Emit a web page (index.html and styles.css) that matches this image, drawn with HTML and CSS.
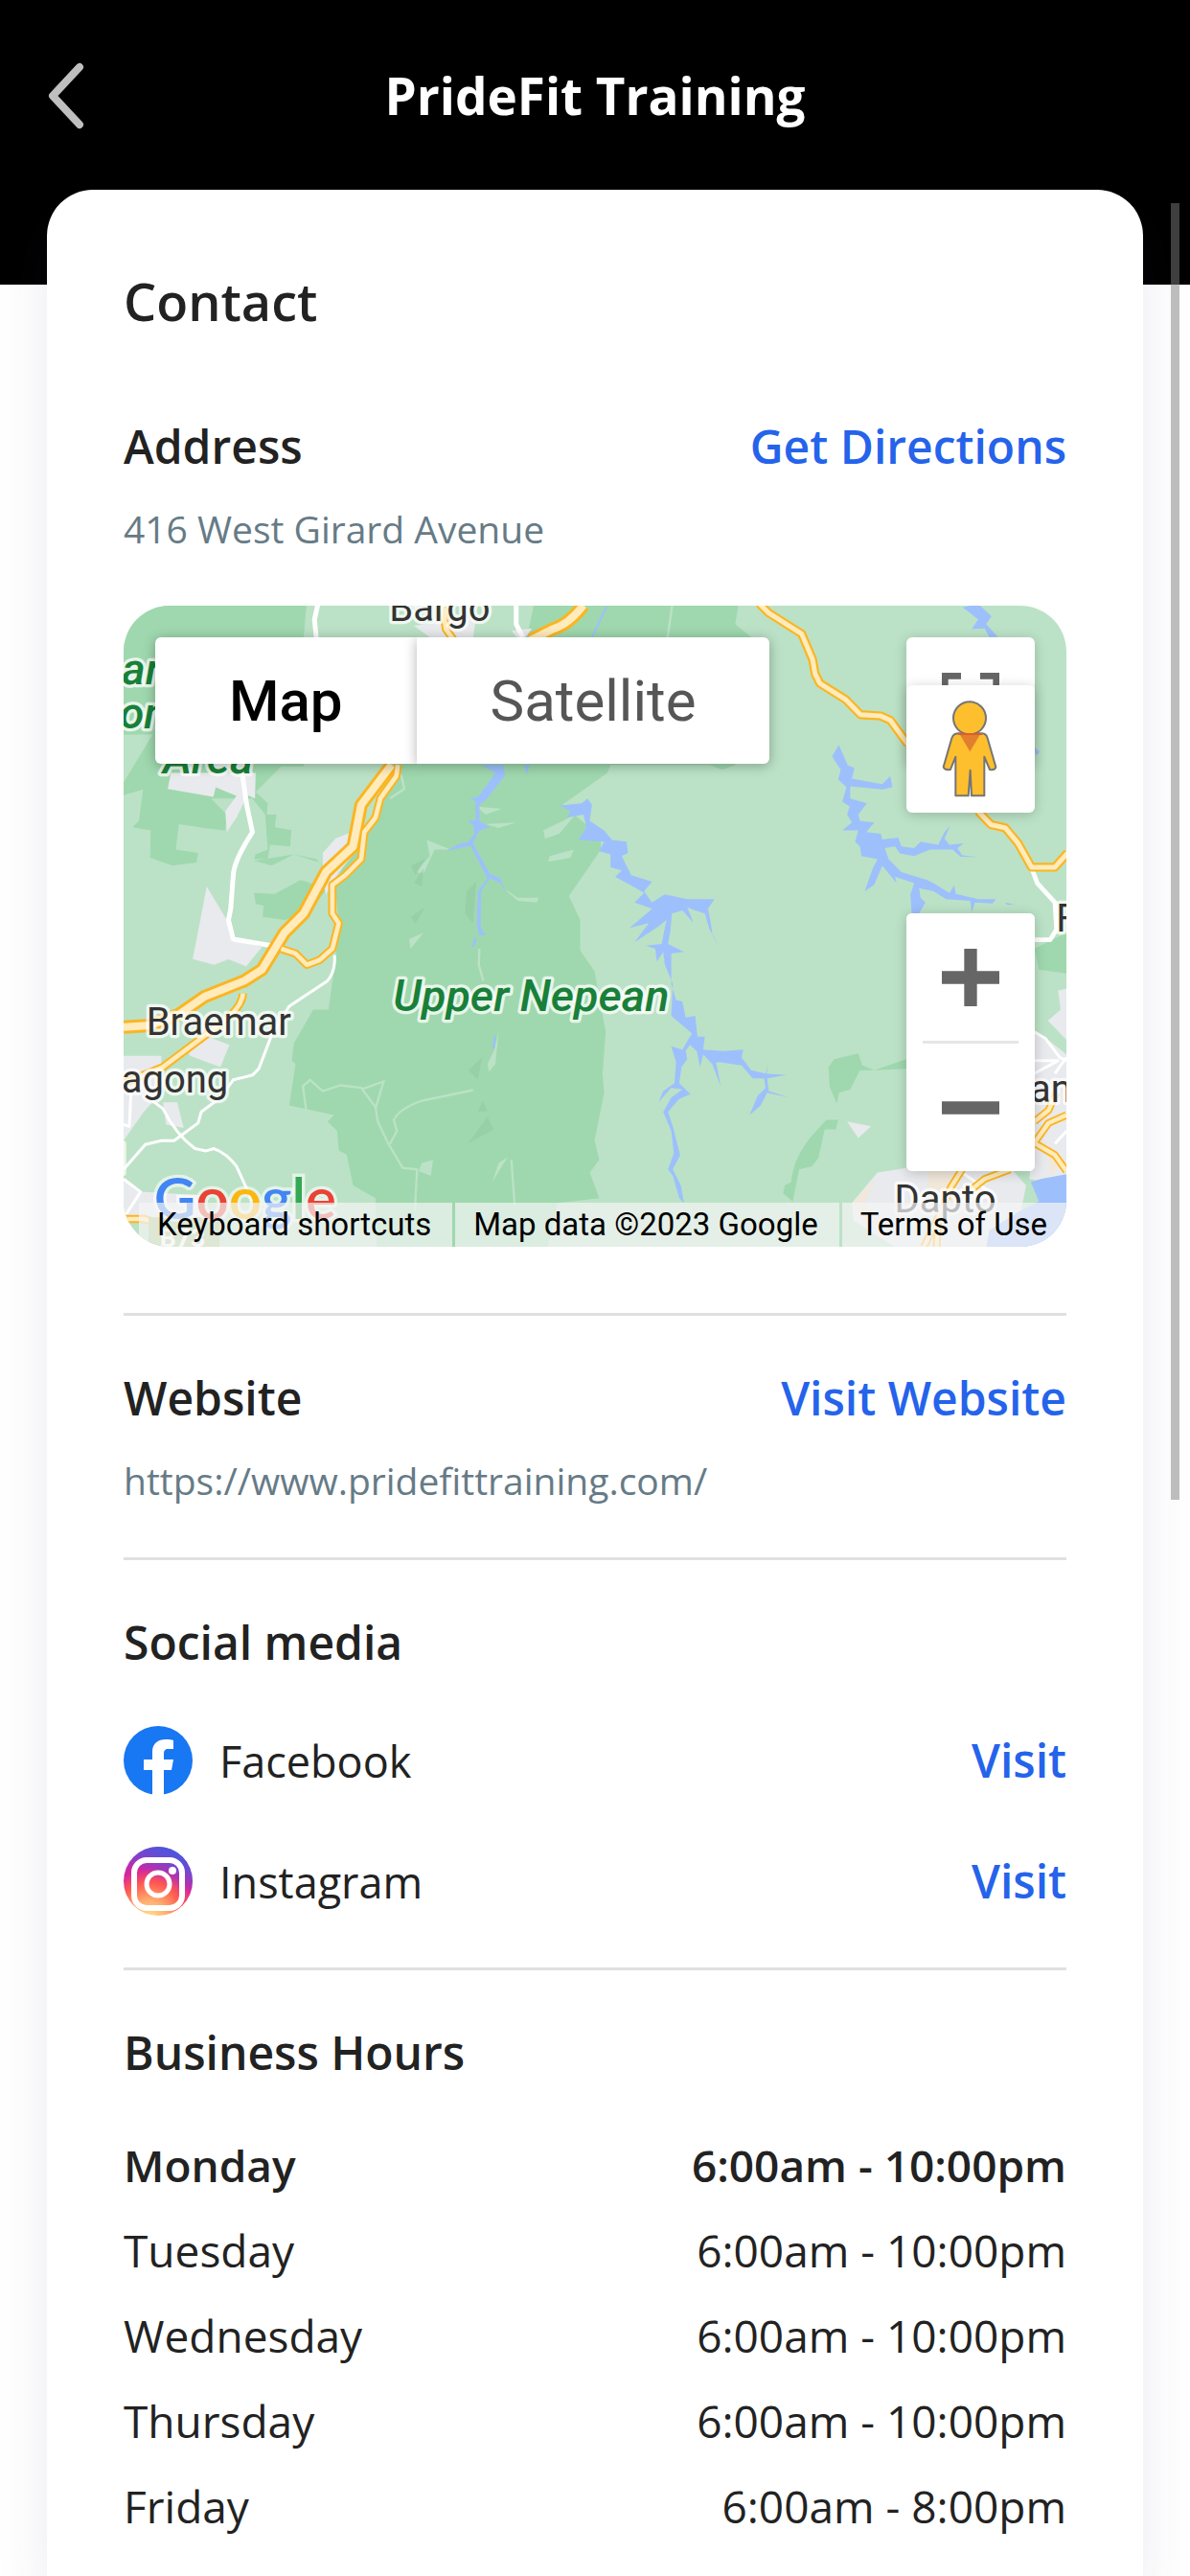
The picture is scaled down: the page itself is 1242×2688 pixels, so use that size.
FILE: index.html
```html
<!DOCTYPE html>
<html lang="en">
<head>
  <meta charset="UTF-8">
  <meta name="viewport" content="width=device-width, initial-scale=1.0">
  <title>PrideFit Training</title>
  <link rel="stylesheet" href="styles.css">
</head>
<body>
  <header class="topbar">
    <button class="back-btn" aria-label="Back">
      <svg width="40" height="72" viewBox="0 0 40 72"><path d="M34 6 L6 36 L34 66" fill="none" stroke="#bfbfbf" stroke-width="8" stroke-linecap="round" stroke-linejoin="round"/></svg>
    </button>
    <h1>PrideFit Training</h1>
  </header>

  <main class="card">
    <h2>Contact</h2>

    <!-- Address -->
    <section class="block">
      <div class="row">
        <h3>Address</h3>
        <a href="#" class="action">Get Directions</a>
      </div>
      <p class="detail">416 West Girard Avenue</p>

      <div class="map">
        <svg class="map-canvas" viewBox="27 36 2949 2007" preserveAspectRatio="xMidYMid slice">
          <rect x="0" y="0" width="3100" height="2100" fill="#bbe2c6"/>

          <!-- Forest -->
          <g fill="#9fd8ae">
            <path d="M0 0 H602 L590 140 V540 H520 L440 620 L478 655 L475 690 L505 690 L500 730 L552 738 L548 790 L485 785 L478 830 L435 830 L440 815 L478 800 L470 690 L430 640 L300 640 L350 690 L345 740 L300 735 L200 720 L190 800 L260 810 L255 840 L180 850 L110 825 L112 740 L55 730 L75 710 L88 612 L27 630 V590 L118 440 H0 Z"/>
            <path d="M435 835 L490 850 L560 815 L630 830 L665 870 L650 920 L600 900 L580 895 L500 938 L435 935 L440 970 L465 975 L462 1010 L530 1020 L600 1000 L700 880 L800 700 L870 530 L1290 130 L1310 36 H1950 L1940 95 L1990 135 L1940 535 L1900 550 L1860 535 H1550 L1540 560 L1400 660 L1520 760 L1520 800 L1420 945 L1455 1020 V1115 L1500 1180 L1535 1370 L1525 1500 L1530 1560 L1500 1710 L1515 1770 L1485 1810 L1515 1890 L1385 1905 L1350 2060 H820 L815 1890 L745 1850 L725 1755 L700 1740 L695 1680 L665 1650 L685 1630 L545 1600 L565 1470 L553 1460 L560 1405 L620 1300 L668 1300 L690 1140 L700 1020 L690 930 L640 840 L560 815 Z"/>
            <path d="M2232 1480 L2250 1455 L2325 1437 L2338 1475 L2375 1490 L2475 1455 L2475 1485 L2375 1490 L2330 1490 L2300 1550 L2265 1560 L2258 1595 L2235 1540 Z"/>
            <path d="M2225 1645 H2262 L2255 1675 H2220 L2200 1765 L2180 1790 L2140 1800 L2120 1900 L2090 1875 L2095 1850 L2115 1840 Q2120 1770 2175 1700 Z"/>
            <path d="M2876 1110 L2976 1060 V1187 L2890 1175 Z"/>
          </g>
          <g fill="#bbe2c6">
            <path d="M740 640 L745 570 L800 580 L780 620 Z"/>
            <path d="M940 870 L985 820 L975 770 L1050 800 L1000 800 L965 875 Z"/>
            <path d="M1340 740 L1440 690 L1390 750 L1345 765 Z M1360 820 L1435 800 L1425 825 L1355 838 Z"/>
            <path d="M1215 920 L1260 950 L1325 950 L1320 965 L1260 960 Z M1130 665 L1210 672 L1160 690 Z M1160 720 L1255 715 L1200 732 Z"/>
            <path d="M920 1080 L965 1060 L925 1110 Z M1200 1370 L1190 1470 L1170 1495 L1165 1470 L1185 1430 Z"/>
            <path d="M960 1780 L995 1770 L988 1820 L950 1805 Z M1180 1840 L1200 1780 L1228 1762 Z"/>
          </g>
          <g fill="#94cda5" opacity="0.7">
            <path d="M925 850 L970 830 L940 880 Z M935 905 L965 860 L960 915 Z M925 1010 L970 980 L940 1030 Z"/>
            <path d="M1100 930 L1130 900 L1120 1030 L1095 1000 Z M1105 1490 L1148 1450 L1135 1520 Z M1135 1620 L1150 1585 L1165 1618 Z M1105 1718 L1165 1635 L1185 1675 Z"/>
          </g>

          <!-- Built up areas -->
          <g fill="#e8eaed">
            <path d="M165 610 L175 560 H440 L438 640 L415 630 L380 700 L350 745 L345 680 L380 632 L315 605 L308 635 Z"/>
            <path d="M287 915 L350 1020 L375 1080 L460 1105 L410 1165 L355 1143 L310 1160 L243 1142 L265 1030 Z"/>
            <path d="M650 810 L690 765 L740 745 L760 800 L700 870 L660 940 L650 900 Z"/>
            <path d="M225 1420 L290 1385 L358 1410 L330 1480 L235 1445 Z"/>
            <path d="M27 1445 H145 V1560 L90 1620 L27 1710 Z M150 1590 H195 L215 1670 L160 1660 Z"/>
            <path d="M27 1830 L80 1870 L260 1880 L290 1960 H27 Z"/>
            <path d="M935 100 L1130 70 L1120 140 H990 Z M1240 115 L1305 108 L1280 140 H1260 Z"/>
            <path d="M2290 1650 L2365 1665 L2325 1702 Z"/>
            <path d="M2876 1365 L2925 1400 L2976 1440 V1850 L2860 1830 L2876 1700 Z"/>
            <path d="M2918 1335 L2958 1300 L2950 1240 L2976 1235 V1395 Z"/>
            <path d="M2305 1905 L2385 1810 L2480 1795 H2800 L2850 1850 L2830 1950 L2740 2043 H2440 L2310 1960 Z"/>
          </g>
          <g fill="#f1e8da">
            <path d="M2310 1900 L2380 1830 L2345 1900 L2420 2000 L2330 1950 Z M2545 1805 H2650 L2590 1900 L2540 1870 Z M2900 1700 L2950 1790 L2930 1820 Z"/>
          </g>

          <!-- Water -->
          <g fill="#9dc0fc">
            <path d="M1145 535 H1215 L1220 568 L1160 645 L1140 660 V710 L1172 730 L1140 740 L1120 780 L1172 875 L1205 890 L1225 940 L1205 905 L1172 890 L1145 930 L1144 1045 L1160 1068 L1140 1068 L1132 1040 L1135 930 L1165 890 L1112 788 L1035 805 L1070 785 L1105 775 L1125 750 L1120 722 L1100 710 L1128 708 V650 L1110 640 L1135 635 L1165 595 L1190 560 Z"/>
            <path d="M1280 535 H1298 L1288 565 Z M1122 1080 L1132 1072 L1128 1095 L1116 1110 Z M1185 1385 L1193 1382 L1187 1425 L1180 1420 Z"/>
            <path d="M1390 662 L1460 655 L1478 640 L1492 660 L1485 710 L1530 740 L1555 770 L1600 775 L1605 810 L1585 820 L1615 880 L1680 900 L1655 930 L1680 965 L1720 940 L1790 955 L1875 955 L1855 985 L1862 1020 L1870 1070 L1892 1105 L1860 1050 L1845 1000 L1815 990 L1790 980 L1810 1030 L1775 990 L1742 1000 L1738 1050 L1730 1095 L1780 1120 L1740 1125 L1740 1220 L1755 1270 L1775 1275 L1785 1325 L1815 1320 L1822 1385 L1845 1385 L1840 1425 L1905 1430 L1965 1425 L1960 1450 L1990 1490 L2035 1500 L2045 1470 L2038 1500 L2100 1505 L2040 1515 L2045 1555 L2110 1575 L2040 1560 L2020 1600 L1985 1630 L2010 1570 L2035 1545 L2030 1515 L1995 1515 L1960 1475 L1895 1465 L1880 1465 L1895 1540 L1868 1470 L1840 1440 L1830 1480 L1820 1430 L1798 1410 L1785 1430 L1790 1455 L1772 1480 L1765 1530 L1800 1565 L1765 1580 L1730 1620 L1745 1665 L1768 1755 L1745 1800 L1770 1850 L1780 1905 L1765 1890 L1745 1820 L1730 1800 L1748 1750 L1740 1680 L1715 1620 L1740 1575 L1775 1550 L1740 1545 L1700 1590 L1715 1555 L1750 1530 L1755 1465 L1740 1415 L1775 1425 L1795 1390 L1805 1375 L1770 1345 L1740 1320 L1745 1220 L1720 1160 L1715 1120 L1695 1150 L1690 1110 L1660 1100 L1710 1095 L1725 1020 L1700 1040 L1625 1090 L1670 1030 L1610 1045 L1680 985 L1625 965 L1655 935 L1620 915 L1565 885 L1585 865 L1550 855 L1550 815 L1515 805 L1530 775 L1450 770 L1475 730 L1465 690 L1415 700 L1425 680 Z"/>
            <path d="M2243 508 L2264 472 L2292 535 L2313 545 L2305 578 L2400 595 L2425 570 L2432 605 L2400 612 L2300 602 V640 L2352 655 L2325 690 L2330 710 L2375 715 L2350 745 L2395 750 L2400 768 L2450 762 L2460 790 L2500 795 L2520 775 L2575 785 L2595 745 L2612 725 L2595 765 L2610 785 L2655 780 L2635 795 L2650 818 L2700 823 L2645 822 L2620 800 L2550 800 L2500 820 L2455 812 L2440 790 L2408 795 L2420 830 L2460 870 L2540 895 L2560 905 L2610 935 L2625 912 L2630 938 L2700 955 L2755 955 L2745 968 L2690 965 L2680 995 L2675 960 L2600 955 L2560 930 L2515 920 L2520 950 L2535 965 L2515 1000 H2492 L2488 940 L2500 905 L2440 885 L2445 905 L2400 850 L2375 910 L2345 930 L2370 860 L2385 830 L2335 820 L2330 790 L2315 775 L2325 740 L2275 740 L2305 715 L2290 690 L2298 665 L2275 650 L2288 605 L2262 580 L2270 550 Z"/>
            <path d="M2652 42 L2680 36 H2705 L2742 70 L2725 95 L2762 135 H2735 L2720 108 L2680 110 L2700 80 Z M2876 480 L2893 495 L2880 505 Z M2785 965 L2815 972 L2790 972 Z"/>
            <path d="M2865 1840 L2895 1830 L2976 1815 V2043 H2725 L2735 1990 L2830 1930 L2890 1900 Z"/>
          </g>
          <path d="M1538 40 L1485 150" fill="none" stroke="#9dc0fc" stroke-width="6"/>

          <!-- Tracks -->
          <g fill="none" stroke="#bbe2c6" stroke-width="7">
            <path d="M598 1615 L588 1540 L610 1520 L650 1555 L705 1537 L770 1545 L815 1605 L822 1650 L855 1720 L900 1795 L945 1800 L938 1930 M770 1550 L840 1525 L815 1610 M1120 1552 L960 1585 Q890 1610 872 1645 L882 1680 L860 1720"/>
            <path d="M1140 1110 L1138 1160 L1152 1210 M1240 1770 L1250 1910 M895 565 L905 610 L860 640 M1743 36 L1728 140"/>
          </g>

          <!-- Local roads -->
          <g fill="none" stroke="#fff" stroke-linejoin="round">
            <path stroke-width="15" d="M634 36 L624 80 L630 140 M1255 36 V95 L1275 135 M398 560 L412 660 L430 745 Q372 835 370 880 L362 985 L355 1020 L370 1080 L490 1100"/>
            <path stroke-width="9" d="M687 1130 Q690 1180 665 1210 L545 1290 L490 1380 L450 1485 L430 1505 L370 1520 L330 1575 L270 1620 L260 1655 L185 1710 L145 1710 L95 1722 L27 1800 M110 1580 L150 1610 Q190 1690 250 1735 L285 1742 L310 1735 Q350 1750 380 1790 L430 1900 M50 1560 L45 1665 L27 1660 M27 1830 L80 1870 L35 1940"/>
            <path stroke-width="14" d="M2870 865 L2885 905 L2940 965 L2945 1050 L2925 1082 H2870"/>
            <path stroke-width="9" d="M2876 1370 L2910 1390 L2955 1450 L2976 1460 M2876 1460 H2950 L2876 1500 M2940 1500 L2976 1450 M2976 1680 L2940 1720 M2650 1810 L2750 1880 L2700 1890"/>
          </g>

          <!-- Highways -->
          <g fill="none" stroke="#fbb522" stroke-linejoin="round" stroke-width="26">
            <path d="M885 535 L880 570 L830 640 L815 700 L780 745 L770 830 L720 880 L680 910 V1000 L700 1030 L680 1110 L640 1145 L600 1160 L565 1125 L520 1110 M400 1250 Q400 1280 360 1320 L290 1375 L190 1450 L150 1480 L27 1530 M27 1955 H90 L190 1985"/>
            <path d="M1025 36 L1035 110 L1060 145"/>
          </g>
          <g fill="none" stroke="#fbb522" stroke-linejoin="round">
            <path stroke-width="42" d="M1465 36 Q1420 95 1370 110 L1300 145 M865 535 L770 660 L745 790 L660 870 L590 1000 L530 1060 L460 1175 L405 1210 L280 1260 L200 1315 L110 1350 L27 1355"/>
            <path stroke-width="28" d="M2015 30 L2045 60 L2148 125 L2182 205 L2190 250 L2205 280 L2285 330 L2332 378 L2395 382 L2425 395 L2480 470 M2700 680 L2740 722 L2785 732 L2825 780 L2867 855 H2940 L2980 810"/>
            <path stroke-width="24" d="M2976 1630 L2920 1655 L2870 1725 M2880 1720 L2940 1755 L2976 1805 M2876 1650 L2920 1615 L2945 1560 M2800 1800 L2720 1830 L2670 1870 M2650 1800 L2615 1855 L2580 1940 L2530 2043 M2575 1960 L2570 2043"/>
          </g>
          <g fill="none" stroke="#ffebbb" stroke-linejoin="round">
            <path stroke-width="14" d="M885 535 L880 570 L830 640 L815 700 L780 745 L770 830 L720 880 L680 910 V1000 L700 1030 L680 1110 L640 1145 L600 1160 L565 1125 L520 1110 M400 1250 Q400 1280 360 1320 L290 1375 L190 1450 L150 1480 L27 1530 M27 1955 H90 L190 1985 M1025 36 L1035 110 L1060 145"/>
            <path stroke-width="24" d="M1465 36 Q1420 95 1370 110 L1300 145 M865 535 L770 660 L745 790 L660 870 L590 1000 L530 1060 L460 1175 L405 1210 L280 1260 L200 1315 L110 1350 L27 1355"/>
            <path stroke-width="15" d="M2015 30 L2045 60 L2148 125 L2182 205 L2190 250 L2205 280 L2285 330 L2332 378 L2395 382 L2425 395 L2480 470 M2700 680 L2740 722 L2785 732 L2825 780 L2867 855 H2940 L2980 810"/>
            <path stroke-width="13" d="M2976 1630 L2920 1655 L2870 1725 M2880 1720 L2940 1755 L2976 1805 M2876 1650 L2920 1615 L2945 1560 M2800 1800 L2720 1830 L2670 1870 M2650 1800 L2615 1855 L2580 1940 L2530 2043 M2575 1960 L2570 2043"/>
          </g>

          <rect x="105" y="1950" width="222" height="110" fill="#a5c587"/>
          <text class="route-label" x="140" y="2042">B73</text>

          <!-- Place names -->
          <g class="place-label">
            <text x="858" y="84">Bargo</text>
            <text x="98" y="1380">Braemar</text>
            <text x="20" y="1560">agong</text>
            <text x="34" y="1810" text-anchor="end">l</text>
            <text x="2438" y="1934">Dapto</text>
            <text x="2862" y="1588">and</text>
            <text x="2944" y="1057">F</text>
          </g>
          <g class="park-label">
            <text x="22" y="282">ar</text>
            <text x="14" y="420">on</text>
            <text x="150" y="562">Area</text>
            <text x="870" y="1305">Upper Nepean</text>
          </g>
          <text class="map-logo" x="122" y="1954"><tspan fill="#4285f4">G</tspan><tspan fill="#ea4335">o</tspan><tspan fill="#fbb70f">o</tspan><tspan fill="#4285f4">g</tspan><tspan fill="#34a853">l</tspan><tspan fill="#ea4335">e</tspan></text>
        </svg>

        <div class="map-types">
          <button class="map-type selected">Map</button>
          <button class="map-type">Satellite</button>
        </div>

        <div class="map-side">
          <button class="map-btn fullscreen" aria-label="Toggle fullscreen view">
            <svg width="60" height="60" viewBox="0 0 18 18"><path fill="#666" d="M0 0v6h2V2h4V0H0zm16 0h-4v2h4v4h2V0h-2zm0 16h-4v2h6v-6h-2v4zM2 12H0v6h6v-2H2v-4z"/></svg>
          </button>
          <button class="map-btn pegman" aria-label="Street View">
            <svg width="60" height="102" viewBox="0 0 180 306">
              <g fill="#fdbf2d" stroke="#757575" stroke-width="6" stroke-linejoin="round">
                <path d="M50 103 H126 Q139 104 143 118 L169 208 Q167 219 150 216 L133 176 V298 H93 L89 218 L83 298 H43 V176 L27 216 Q8 219 5 208 L31 118 Q36 104 50 103 Z"/>
                <circle cx="87" cy="55" r="51"/>
              </g>
              <path fill="#e17f2e" d="M56 106 H120 L88 160 Z"/>
              <path fill="#db5f2b" d="M50 102 H126 V108 H50 Z"/>
            </svg>
          </button>
          <div class="zoom">
            <button class="map-btn" aria-label="Zoom in">
              <svg width="60" height="60" viewBox="0 0 18 18"><path fill="#666" d="M7 0h4v7h7v4h-7v7H7v-7H0V7h7z"/></svg>
            </button>
            <hr>
            <button class="map-btn" aria-label="Zoom out">
              <svg width="60" height="60" viewBox="0 0 18 18"><path fill="#666" d="M0 7h18v4H0z"/></svg>
            </button>
          </div>
        </div>

        <div class="map-legal">
          <button>Keyboard shortcuts</button>
          <span>Map data ©2023 Google</span>
          <a href="#">Terms of Use</a>
        </div>
      </div>
    </section>

    <!-- Website -->
    <section class="block">
      <div class="row">
        <h3>Website</h3>
        <a href="#" class="action">Visit Website</a>
      </div>
      <p class="detail">https://www.pridefittraining.com/</p>
    </section>

    <!-- Social media -->
    <section class="block">
      <h3>Social media</h3>
      <ul class="social">
        <li>
          <svg width="72" height="72" viewBox="0 0 72 72">
            <circle cx="36" cy="36" r="36" fill="#1877f2"/>
            <path fill="#fff" d="M30 72 V46 H21 V35 H30 V27 C30 18 36 14 44 14 C47 14 50 14 52 15 V24 H47 C43 24 42 26 42 29 V35 H52 L50 46 H42 V72 Z"/>
          </svg>
          <span>Facebook</span>
          <a href="#" class="action">Visit</a>
        </li>
        <li>
          <svg width="72" height="72" viewBox="0 0 72 72">
            <defs>
              <radialGradient id="ig-warm" cx="0.38" cy="1.02" r="0.95">
                <stop offset="0" stop-color="#ffe08a"/>
                <stop offset="0.25" stop-color="#ffb070"/>
                <stop offset="0.52" stop-color="#ff5a50"/>
                <stop offset="0.74" stop-color="#d6249f"/>
                <stop offset="1" stop-color="#9a38c2"/>
              </radialGradient>
              <linearGradient id="ig-cool" x1="0.65" y1="0" x2="0.45" y2="0.45">
                <stop offset="0" stop-color="#4757e0"/>
                <stop offset="1" stop-color="#4757e0" stop-opacity="0"/>
              </linearGradient>
            </defs>
            <circle cx="36" cy="36" r="36" fill="url(#ig-warm)"/>
            <circle cx="36" cy="36" r="36" fill="url(#ig-cool)"/>
            <rect x="11" y="14" width="50" height="50" rx="13" fill="none" stroke="#fff" stroke-width="6"/>
            <circle cx="36" cy="39" r="12" fill="none" stroke="#fff" stroke-width="5"/>
            <circle cx="51" cy="25" r="4" fill="#fff"/>
          </svg>
          <span>Instagram</span>
          <a href="#" class="action">Visit</a>
        </li>
      </ul>
    </section>

    <!-- Hours -->
    <section class="block">
      <h3>Business Hours</h3>
      <table class="hours">
        <tr class="today"><th scope="row">Monday</th><td>6:00am - 10:00pm</td></tr>
        <tr><th scope="row">Tuesday</th><td>6:00am - 10:00pm</td></tr>
        <tr><th scope="row">Wednesday</th><td>6:00am - 10:00pm</td></tr>
        <tr><th scope="row">Thursday</th><td>6:00am - 10:00pm</td></tr>
        <tr><th scope="row">Friday</th><td>6:00am - 8:00pm</td></tr>
      </table>
    </section>
  </main>

  <div class="scroll-thumb"></div>
</body>
</html>
```

FILE: styles.css
```css
* {
  box-sizing: border-box;
}
body {
  margin: 0;
  min-height: 100vh;
  display: flex;
  flex-direction: column;
  background: #fff;
  color: #222;
  font-family: "Open Sans", Lato, sans-serif;
  font-size: 48px;
}
h1, h2, h3, p, ul {
  margin: 0;
  padding: 0;
}
button {
  border: none;
  background: none;
  padding: 0;
  font: inherit;
  color: inherit;
  cursor: pointer;
}
a {
  color: inherit;
  text-decoration: none;
}
svg {
  display: block;
}

/* Header */
.topbar {
  display: grid;
  grid-template-columns: 96px 1fr 96px;
  align-items: center;
  padding: 64px 0 161px;
  background: #000;
  color: #fff;
}
.back-btn {
  justify-self: end;
  padding-right: 7px;
}
h1 {
  font-size: 53px;
  line-height: 72px;
  font-weight: 700;
  text-align: center;
}

/* Card */
.card {
  flex: 1;
  margin: -99px 49px 0;
  padding: 80px 80px 0;
  background: #fff;
  border-radius: 48px 48px 0 0;
  box-shadow: 0 24px 56px rgba(60, 60, 110, 0.1);
}
h2 {
  margin-bottom: 30px;
  font-size: 54px;
  font-weight: 600;
  line-height: 72px;
}
h3 {
  font-size: 48px;
  font-weight: 600;
  line-height: 64px;
}
.block {
  padding: 54px 0 52px;
}
.block + .block {
  border-top: 3px solid #e0e0e0;
}
.block:last-child {
  padding-bottom: 24px;
}
.row {
  display: flex;
  justify-content: space-between;
}
.action {
  color: #2563eb;
  font-size: 48px;
  font-weight: 600;
  line-height: 64px;
}
.detail {
  margin-top: 26px;
  color: #667b86;
  font-size: 39px;
  font-weight: 500;
  line-height: 56px;
}

/* Map */
.map {
  position: relative;
  height: 669px;
  margin: 52px 0 17px;
  border-radius: 48px;
  overflow: hidden;
  font-family: Roboto, sans-serif;
}
.map-canvas {
  width: 100%;
  height: 100%;
}
.place-label, .park-label {
  font-family: Roboto, sans-serif;
  font-size: 120px;
  fill: #333;
  stroke: #fff;
  stroke-opacity: 0.75;
  stroke-width: 20px;
  stroke-linejoin: round;
  paint-order: stroke;
}
.park-label {
  font-size: 140px;
  font-style: italic;
  font-weight: 500;
  fill: #188038;
}
.route-label {
  font-family: Roboto, sans-serif;
  font-size: 80px;
  font-weight: 700;
  fill: #fff;
}
.map-logo {
  font-family: Lato, sans-serif;
  font-size: 180px;
  font-weight: 600;
  stroke: #fff;
  stroke-opacity: 0.6;
  stroke-width: 20px;
  paint-order: stroke;
}
.map-types {
  position: absolute;
  top: 33px;
  left: 33px;
  display: flex;
}
.map-type {
  height: 132px;
  padding: 0 77px;
  background: #fff;
  color: #565656;
  font-size: 60px;
  border-radius: 0 6px 6px 0;
  box-shadow: 0 2px 13px rgba(0, 0, 0, 0.3);
}
.map-type.selected {
  color: #000;
  font-weight: 500;
  border-radius: 6px 0 0 6px;
}
.map-side {
  position: absolute;
  top: 33px;
  right: 33px;
  width: 134px;
}
.map-btn {
  display: flex;
  align-items: center;
  justify-content: center;
  width: 100%;
  height: 133px;
  background: #fff;
}
.fullscreen, .pegman, .zoom {
  border-radius: 6px;
  box-shadow: 0 2px 13px rgba(0, 0, 0, 0.2);
}
.pegman {
  position: relative;
  margin-top: -83px;
}
.zoom {
  margin-top: 105px;
  background: #fff;
  overflow: hidden;
}
.zoom hr {
  width: 100px;
  height: 3px;
  margin: 0 auto;
  border: none;
  background: #e6e6e6;
}
.map-legal {
  position: absolute;
  left: 16px;
  right: 0;
  bottom: 0;
  display: flex;
  gap: 3px;
  color: #000;
  font-size: 33px;
  line-height: 46px;
  white-space: nowrap;
}
.map-legal > * {
  padding: 0 22px 0 19px;
  background: rgba(245, 245, 245, 0.7);
}
.map-legal a {
  flex: 1;
}

/* Social media */
.social {
  display: flex;
  flex-direction: column;
  gap: 54px;
  margin-top: 55px;
  list-style: none;
}
.social li {
  display: flex;
  align-items: center;
  height: 72px;
  font-size: 45px;
}
.social li:last-child {
  margin-bottom: 2px;
}
.social span {
  flex: 1;
  margin-left: 28px;
}

/* Hours */
.hours {
  width: 100%;
  margin-top: 40px;
  border-collapse: collapse;
  font-size: 46px;
}
.hours th, .hours td {
  height: 89px;
  padding: 0;
  font-weight: 400;
  text-align: left;
}
.hours td {
  text-align: right;
}
.hours .today th, .hours .today td {
  font-weight: 600;
}

.scroll-thumb {
  position: fixed;
  top: 212px;
  right: 11px;
  width: 9px;
  height: 1353px;
  background: rgba(125, 125, 125, 0.5);
}
```
